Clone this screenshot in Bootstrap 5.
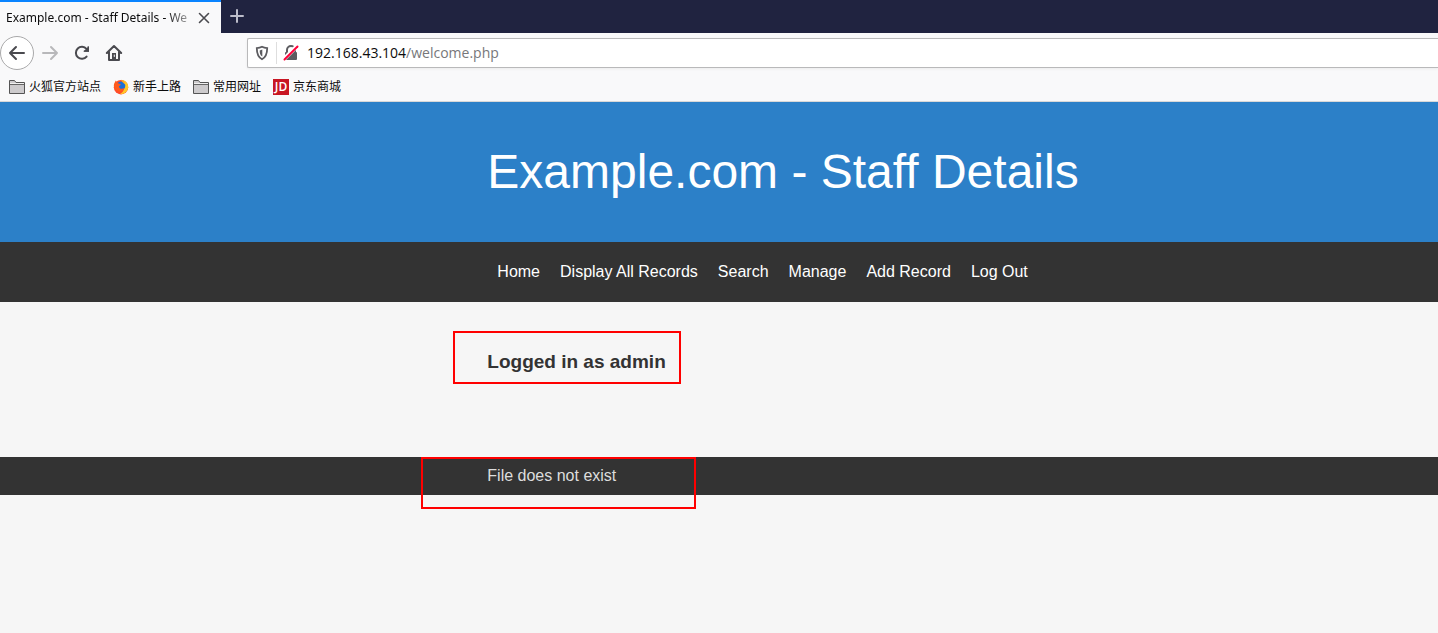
<!DOCTYPE html>
<html lang="en">
<head>
<meta charset="utf-8">
<meta name="viewport" content="width=device-width, initial-scale=1">
<title>Example.com - Staff Details - Welcome</title>
<link href="https://cdn.jsdelivr.net/npm/bootstrap@5.3.0/dist/css/bootstrap.min.css" rel="stylesheet">
<style>
  body { background: #f6f6f6; color: #333; font-family: "Liberation Sans", Arial, sans-serif; font-size: 16px; line-height: 24px; }
  .chrome { background: #f9f9fa; color: #0c0c0d; font-family: "Noto Sans", "Noto Sans CJK SC", sans-serif; border-bottom: 1px solid #d8d8d8; }
  .tabstrip { background: #202340; height: 33px; }
  .browser-tab { background: #f9f9fa; width: 221px; border-top: 2px solid #0a84ff; font-size: 12px; padding: 0 9px 0 6px; }
  .tab-title { line-height: 30px; -webkit-mask-image: linear-gradient(to right, #000 160px, transparent 195px); mask-image: linear-gradient(to right, #000 160px, transparent 195px); }
  .icon-btn { width: 32px; height: 32px; }
  .back-btn { width: 34px; height: 34px; background: #fff; border: 1px solid #a9a9aa; border-radius: 50%; }
  .toolbar { height: 40px; }
  .toolbar-nav { width: 247px; }
  .urlbar { height: 30px; background: #fff; border: 1px solid #b9b9ba; border-right: 0; border-radius: 2px 0 0 2px; box-shadow: 0 1px 3px rgba(0,0,0,.06); }
  .shield { width: 29px; height: 22px; border-right: 1px solid #dedede; }
  .lock { margin: 0 6px 0 4px; }
  .address { position: relative; font-family: "Open Sans", sans-serif; font-size: 14px; line-height: 28px; }
  .address input { color: transparent; caret-color: #000; font: inherit; }
  .address-text { position: absolute; inset: 0; pointer-events: none; }
  .address-text span { color: #77777a; }
  .bookmarks { height: 28px; font-size: 12px; gap: 12px; padding-left: 9px; }
  .bookmarks a { color: #0c0c0d; gap: 4px; }
  .site-header { background: #2c80c8; height: 140px; }
  .site-header h1 { color: #fff; font-size: 48px; line-height: 56px; }
  .site-nav { background: #333; height: 60px; }
  .site-nav a { color: #fff; padding: 0 10px; line-height: 60px; }
  .site-main { height: 155px; padding-top: 48px; }
  .site-main h3 { font-size: 19px; line-height: 24px; font-weight: 700; }
  .site-footer { background: #333; color: #ddd; height: 38px; line-height: 38px; }
  .marked { position: relative; }
  .outline { position: absolute; border: 2px solid #f00; pointer-events: none; }
  .outline-login { left: -34px; top: -19px; width: 228px; height: 53px; }
  .outline-file { left: -66px; top: 0; width: 275px; height: 52px; }
</style>
</head>
<body class="min-vh-100">
<div class="chrome">
  <div class="tabstrip d-flex">
    <div class="browser-tab d-flex align-items-center justify-content-between">
      <div class="tab-title text-nowrap">Example.com - Staff Details - We</div>
      <button class="btn p-0 border-0 d-flex flex-shrink-0" aria-label="Close tab"><svg width="16" height="16" viewBox="0 0 16 16" stroke="#4a4a4f" stroke-width="1.6" stroke-linecap="round"><path d="M3.500 3.500l9 9M12.500 3.500l-9 9"/></svg></button>
    </div>
    <button class="btn p-0 border-0 icon-btn d-flex align-items-center justify-content-center" aria-label="New tab"><svg width="16" height="16" viewBox="0 0 16 16" stroke="#bcbdca" stroke-width="2" stroke-linecap="round"><path d="M8 2v12M2 8h12"/></svg></button>
  </div>
  <div class="toolbar d-flex align-items-center">
    <div class="toolbar-nav d-flex align-items-center flex-shrink-0">
      <button class="btn p-0 back-btn d-flex align-items-center justify-content-center" aria-label="Back"><svg width="18" height="18" viewBox="0 0 18 18" fill="none" stroke="#4a4a4f" stroke-width="2" stroke-linecap="round" stroke-linejoin="round"><path d="M16 9H2M8 3L2 9l6 6"/></svg></button>
      <button class="btn p-0 border-0 icon-btn d-flex align-items-center justify-content-center" aria-label="Forward"><svg width="18" height="18" viewBox="0 0 18 18" fill="none" stroke="#b8b8ba" stroke-width="2" stroke-linecap="round" stroke-linejoin="round"><path d="M2 9h14M10 3l6 6-6 6"/></svg></button>
      <button class="btn p-0 border-0 icon-btn d-flex align-items-center justify-content-center" aria-label="Reload"><svg width="16" height="16" viewBox="0 0 16 16" fill="none" stroke="#4a4a4f" stroke-width="2" stroke-linecap="round"><path d="M12.6 11.6A6 6 0 1 1 12.5 4"/><path d="M15 1.2v5.6H9.400z" fill="#4a4a4f" stroke="none"/><path d="M14.200 2v4H10.500" stroke-width="1.600"/></svg></button>
      <button class="btn p-0 border-0 icon-btn d-flex align-items-center justify-content-center" aria-label="Home"><svg width="18" height="18" viewBox="0 0 18 18" fill="none" stroke="#4a4a4f" stroke-width="2" stroke-linecap="round" stroke-linejoin="round"><path d="M1.800 9L9 2l7.200 7M4 8v8h10V8"/><path d="M7 9h4v6H7z" fill="#4a4a4f" stroke="none"/><path d="M9.300 11v1.500" stroke="#f9f9fa" stroke-width="1"/></svg></button>
    </div>
    <div class="urlbar d-flex align-items-center flex-grow-1">
      <div class="shield d-flex align-items-center justify-content-center"><svg width="14" height="16" viewBox="0 0 14 16"><path d="M7 1.800c1.700.9 3.300 1.200 5.200 1.300C12.200 8.300 11.600 12 7 14.300 2.400 12 1.800 8.300 1.800 3.100 3.700 3 5.300 2.700 7 1.800z" fill="none" stroke="#5c5c60" stroke-width="1.800"/><path d="M7.300 4.600v7C5 10 4.700 8 4.700 5.400 5.600 5.200 6.500 5 7.300 4.600z" fill="#5c5c60"/></svg></div>
      <svg class="lock flex-shrink-0" width="20" height="18" viewBox="0 0 20 18"><path d="M6 8V6a4 4 0 0 1 8 0v2" fill="none" stroke="#5c5c60" stroke-width="2"/><rect x="4" y="8" width="12" height="8" rx="1" fill="#5c5c60"/><path d="M3 15L16 2" stroke="#fff" stroke-width="4"/><path d="M3.500 15.500L16.500 2.500" stroke="#ff0039" stroke-width="2" stroke-linecap="round"/></svg>
      <div class="address flex-grow-1">
        <input class="border-0 bg-transparent w-100 p-0 d-block" type="text" aria-label="Address">
        <div class="address-text text-nowrap">192.168.43.104<span>/welcome.php</span></div>
      </div>
    </div>
  </div>
  <nav class="bookmarks d-flex align-items-center" aria-label="Bookmarks">
    <a class="d-flex align-items-center text-decoration-none" href="#"><svg width="16" height="16" viewBox="0 0 16 16"><path d="M.5 14.500v-13h5l1.500 2h8.500v11z" fill="#cdcbcd" stroke="#555"/><path d="M1 5.500h14" stroke="#666"/><path d="M1 4.500h14" stroke="#f0f0f0"/></svg>火狐官方站点</a>
    <a class="d-flex align-items-center text-decoration-none" href="#"><svg width="16" height="16" viewBox="0 0 16 16"><circle cx="8" cy="8.200" r="7.200" fill="#ff4b2b"/><path d="M10 1c4 1.500 6 5 5 8.500-1 3.800-4.500 6-8 5.400C11 13 13 8 10 1z" fill="#ffc928"/><circle cx="8" cy="6.800" r="4.300" fill="#1c6fd8"/><path d="M.8 7C.8 4.500 2 3 2.800 1.500L4.500 4 8 5.500 5.800 7.500C6.500 10.500 9.500 10 11.500 9 10.500 13 5.500 14 3 11z" fill="#ff5a1c"/><path d="M8 .8c2.500.5 4 2.200 4.400 5C10.500 4 9 3 8 .8z" fill="#ffb020"/></svg>新手上路</a>
    <a class="d-flex align-items-center text-decoration-none" href="#"><svg width="16" height="16" viewBox="0 0 16 16"><path d="M.5 14.500v-13h5l1.500 2h8.500v11z" fill="#cdcbcd" stroke="#555"/><path d="M1 5.500h14" stroke="#666"/><path d="M1 4.500h14" stroke="#f0f0f0"/></svg>常用网址</a>
    <a class="d-flex align-items-center text-decoration-none" href="#"><svg width="16" height="16" viewBox="0 0 16 16"><rect width="16" height="16" fill="#c81623"/><text x="8" y="12" text-anchor="middle" font-family="Open Sans, sans-serif" font-size="12" font-weight="600" fill="#fff">JD</text></svg>京东商城</a>
  </nav>
</div>

<header class="site-header">
  <div class="row g-0 h-100 align-items-center">
    <div class="col-8 offset-4 ps-2"><h1 class="m-0 fw-normal text-nowrap">Example.com - Staff Details</h1></div>
  </div>
</header>
<nav class="site-nav" aria-label="Main">
  <div class="row g-0">
    <div class="col-8 offset-4 ps-2">
      <ul class="list-unstyled d-flex m-0 text-nowrap">
        <li><a class="d-block text-decoration-none" href="#">Home</a></li>
        <li><a class="d-block text-decoration-none" href="#">Display All Records</a></li>
        <li><a class="d-block text-decoration-none" href="#">Search</a></li>
        <li><a class="d-block text-decoration-none" href="#">Manage</a></li>
        <li><a class="d-block text-decoration-none" href="#">Add Record</a></li>
        <li><a class="d-block text-decoration-none" href="#">Log Out</a></li>
      </ul>
    </div>
  </div>
</nav>
<main class="site-main">
  <div class="row g-0">
    <div class="col-8 offset-4 ps-2">
      <div class="marked"><h3 class="m-0">Logged in as admin</h3><div class="outline outline-login"></div></div>
    </div>
  </div>
</main>
<footer class="site-footer">
  <div class="row g-0">
    <div class="col-8 offset-4 ps-2">
      <div class="marked">File does not exist<div class="outline outline-file"></div></div>
    </div>
  </div>
</footer>
<script src="https://cdn.jsdelivr.net/npm/bootstrap@5.3.0/dist/js/bootstrap.bundle.min.js"></script>
</body>
</html>
